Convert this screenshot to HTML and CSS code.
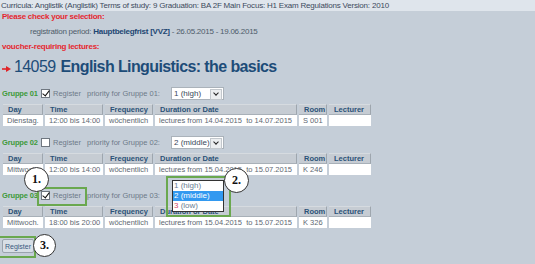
FILE: index.html
```html
<!DOCTYPE html>
<html>
<head>
<meta charset="utf-8">
<link rel="stylesheet" href="styles.css">
</head>
<body>
<div class="page">
  <div class="topbar">Curricula: Anglistik (Anglistik) Terms of study: 9 Graduation: BA 2F Main Focus: H1 Exam Regulations Version: 2010</div>
  <div class="warn">Please check your selection:</div>
  <div class="period">registration period: <b>Hauptbelegfrist [VVZ]</b> - 26.05.2015 - 19.06.2015</div>
  <div class="warn warn2">voucher-requiring lectures:</div>
  <h1 class="title"><svg class="arrow" width="12" height="8" viewBox="0 0 12 8"><path d="M1 4 H6" stroke="#e02428" stroke-width="1.6"/><path d="M5 1 L10 4 L5 7 Z" fill="#e02428"/></svg><span class="num">14059</span> <b>English Linguistics: the basics</b></h1>

  <div class="group g1">
    <div class="grow"><span class="gname">Gruppe 01</span><span class="cb checked"></span><span class="lbl">Register</span><span class="prio">priority for Gruppe 01:</span><span class="sel">1 (high)<span class="dd"></span></span></div>
    <table class="sched">
      <tr><th class="c1">Day</th><th class="c2">Time</th><th class="c3">Frequency</th><th class="c4">Duration or Date</th><th class="c5">Room</th><th class="c6">Lecturer</th></tr>
      <tr><td>Dienstag.</td><td>12:00 bis 14:00</td><td>wöchentlich</td><td>lectures from 14.04.2015 &nbsp;to 14.07.2015</td><td>S 001</td><td></td></tr>
    </table>
  </div>

  <div class="group g2">
    <div class="grow"><span class="gname">Gruppe 02</span><span class="cb"></span><span class="lbl">Register</span><span class="prio">priority for Gruppe 02:</span><span class="sel">2 (middle)<span class="dd"></span></span></div>
    <table class="sched">
      <tr><th class="c1">Day</th><th class="c2">Time</th><th class="c3">Frequency</th><th class="c4">Duration or Date</th><th class="c5">Room</th><th class="c6">Lecturer</th></tr>
      <tr><td>Mittwoch.</td><td>12:00 bis 14:00</td><td>wöchentlich</td><td>lectures from 15.04.2015 &nbsp;to 15.07.2015</td><td>K 246</td><td></td></tr>
    </table>
  </div>

  <div class="group g3">
    <div class="grow"><span class="gname">Gruppe 03</span><span class="cb checked"></span><span class="lbl">Register</span><span class="prio">priority for Gruppe 03:</span><span class="sel hidden">2 (middle)<span class="dd"></span></span></div>
    <table class="sched">
      <tr><th class="c1">Day</th><th class="c2">Time</th><th class="c3">Frequency</th><th class="c4">Duration or Date</th><th class="c5">Room</th><th class="c6">Lecturer</th></tr>
      <tr><td>Mittwoch.</td><td>18:00 bis 20:00</td><td>wöchentlich</td><td>lectures from 15.04.2015 &nbsp;to 15.07.2015</td><td>K 326</td><td></td></tr>
    </table>
  </div>

  <button class="btn">Register</button>

  <div class="hl hl1"></div>
  <div class="hl hl2"></div>
  <div class="hl hl3"></div>
  <div class="list">
    <div class="opt">1 (high)</div>
    <div class="opt on">2 (middle)</div>
    <div class="opt"><span class="pink">3</span> (low)</div>
  </div>
  <div class="badge b1">1.</div>
  <div class="badge b2">2.</div>
  <div class="badge b3">3.</div>
</div>
</body>
</html>
```
FILE: styles.css
```css
html, body {
  margin: 0;
  padding: 0;
}
body {
  background: #c5ced8;
  font-family: "Liberation Sans", Arial, sans-serif;
  width: 535px;
  height: 264px;
  overflow: hidden;
}
.page {
  position: relative;
  width: 535px;
  height: 264px;
}
.topbar {
  background: #dfe5ec;
  color: #3c4a5c;
  font-size: 8px;
  letter-spacing: -0.2px;
  line-height: 11px;
  height: 11px;
  padding-left: 1px;
  white-space: nowrap;
}
.warn {
  color: #e5262f;
  font-weight: bold;
  font-size: 8px;
  letter-spacing: -0.25px;
  line-height: 10px;
  margin-top: 1px;
  padding-left: 2px;
}
.period {
  color: #4e5c6a;
  font-size: 8px;
  letter-spacing: -0.25px;
  line-height: 10px;
  margin-top: 5px;
  padding-left: 30px;
}
.period b {
  color: #1d4672;
}
.warn2 {
  margin-top: 5px;
}
.title {
  margin: 5px 0 0 0;
  height: 20px;
  font-size: 16px;
  letter-spacing: -0.6px;
  line-height: 20px;
  color: #1d4c78;
  font-weight: normal;
  display: flex;
  align-items: center;
  white-space: nowrap;
}
.arrow {
  margin: 4px 1px 0 1px;
}
.num {
  margin-right: 5px;
}
.title b {
  font-weight: bold;
}
.g1 { margin-top: 10px; }
.g2 { margin-top: 10px; }
.g3 { margin-top: 14px; }
.grow {
  display: flex;
  align-items: center;
  height: 13px;
  font-size: 7.5px;
  padding-left: 2px;
  white-space: nowrap;
}
.gname {
  color: #3d9a3a;
  font-weight: bold;
  letter-spacing: -0.15px;
  width: 39px;
}
.cb {
  width: 9px;
  height: 9px;
  box-sizing: border-box;
  background: #fff;
  border: 1px solid #6f7780;
  margin-right: 3px;
  position: relative;
}
.cb.checked::after {
  content: "";
  position: absolute;
  left: 2px;
  top: -1px;
  width: 3px;
  height: 6px;
  border: solid #111;
  border-width: 0 1.6px 1.6px 0;
  transform: rotate(38deg);
}
.lbl {
  color: #6d7a88;
  width: 34px;
}
.prio {
  color: #6d7a88;
  width: 84px;
}
.sel {
  position: relative;
  width: 53px;
  height: 13px;
  box-sizing: border-box;
  background: #fff;
  border: 1px solid #aab2ba;
  color: #38485a;
  font-size: 8px;
  line-height: 11px;
  padding-left: 2px;
}
.sel.hidden {
  visibility: hidden;
}
.dd {
  position: absolute;
  right: 1px;
  top: 1px;
  width: 10px;
  height: 9px;
  background: #eceef0;
  border: 1px solid #c2c7cc;
}
.dd::after {
  content: "";
  position: absolute;
  left: 3px;
  top: 1px;
  width: 3px;
  height: 3px;
  border: solid #222;
  border-width: 0 1.6px 1.6px 0;
  transform: rotate(45deg);
}
.sched {
  table-layout: fixed;
  width: 372px;
  border-collapse: separate;
  border-spacing: 2px 0;
  margin: 4px 0 0 1px;
  font-size: 7.5px;
}
.sched th, .sched td {
  box-sizing: border-box;
  white-space: nowrap;
  overflow: hidden;
  text-align: left;
}
.sched th {
  background: #c6ccd3;
  color: #2b5277;
  font-weight: bold;
  height: 11px;
  padding: 0 0 0 5px;
  border-right: 1px solid #9ea6ae;
  border-bottom: 1px solid #a8b0b8;
  border-top: 1px solid #d6dbe0;
  line-height: 9px;
}
.sched td {
  background: #fff;
  color: #5e6872;
  height: 11px;
  padding: 0 0 0 4px;
  line-height: 11px;
}
.c1 { width: 40px; }
.c2 { width: 58px; }
.c3 { width: 48px; }
.c4 { width: 142px; }
.c5 { width: 28px; }
.c6 { width: 42px; }
.btn {
  display: block;
  margin: 11px 0 0 2px;
  width: 32px;
  height: 14px;
  padding: 0;
  font-family: "Liberation Sans", Arial, sans-serif;
  font-size: 7px;
  color: #3a5a80;
  background: #d8dfe6;
  border: 1px solid #9aa4ae;
  border-radius: 2px;
}
.hl {
  position: absolute;
  border: 2px solid #6aa84f;
  box-sizing: border-box;
}
.hl1 { left: 37px; top: 187px; width: 50px; height: 19px; }
.hl2 { left: 166px; top: 176px; width: 65px; height: 41px; }
.hl3 { left: -2px; top: 236px; width: 38px; height: 22px; }
.list {
  position: absolute;
  left: 172px;
  top: 180px;
  width: 52px;
  height: 32px;
  box-sizing: border-box;
  background: #fff;
  border: 1px solid #333;
  font-size: 8px;
  line-height: 10px;
  color: #6a7e94;
}
.opt {
  padding-left: 1px;
  height: 10px;
}
.opt.on {
  background: #3399f0;
  color: #fff;
}
.pink { color: #d04a6a; }
.badge {
  position: absolute;
  width: 25px;
  height: 25px;
  border-radius: 50%;
  background: #fff;
  border: 1px solid #333;
  box-sizing: border-box;
  font-family: "Liberation Serif", "Times New Roman", serif;
  font-weight: bold;
  font-size: 12px;
  display: flex;
  align-items: center;
  justify-content: center;
  color: #111;
}
.b1 { left: 24px; top: 167px; }
.b2 { left: 224px; top: 168px; }
.b3 { left: 33px; top: 234px; width: 23px; height: 23px; }
```
